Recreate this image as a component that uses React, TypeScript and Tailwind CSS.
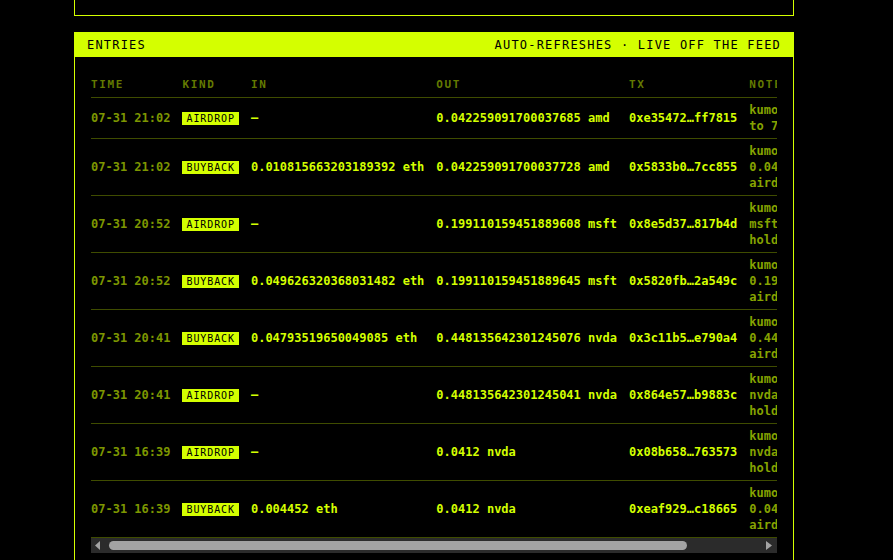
type Entry = {
  time: string;
  kind: "AIRDROP" | "BUYBACK";
  amountIn: string;
  amountOut: string;
  tx: string;
  note: string[];
};

const entries: Entry[] = [
  { time: "07-31 21:02", kind: "AIRDROP", amountIn: "—", amountOut: "0.042259091700037685 amd", tx: "0xe35472…ff7815", note: ["kumo airdrop", "to 7 holders"] },
  { time: "07-31 21:02", kind: "BUYBACK", amountIn: "0.010815663203189392 eth", amountOut: "0.042259091700037728 amd", tx: "0x5833b0…7cc855", note: ["kumo bought", "0.0422 amd for", "airdrop"] },
  { time: "07-31 20:52", kind: "AIRDROP", amountIn: "—", amountOut: "0.199110159451889608 msft", tx: "0x8e5d37…817b4d", note: ["kumo airdrop", "msft to 12", "holders"] },
  { time: "07-31 20:52", kind: "BUYBACK", amountIn: "0.049626320368031482 eth", amountOut: "0.199110159451889645 msft", tx: "0x5820fb…2a549c", note: ["kumo bought", "0.1991 msft", "airdrop"] },
  { time: "07-31 20:41", kind: "BUYBACK", amountIn: "0.04793519650049085 eth", amountOut: "0.448135642301245076 nvda", tx: "0x3c11b5…e790a4", note: ["kumo bought", "0.4481 nvda", "airdrop"] },
  { time: "07-31 20:41", kind: "AIRDROP", amountIn: "—", amountOut: "0.448135642301245041 nvda", tx: "0x864e57…b9883c", note: ["kumo airdrop", "nvda to 9", "holders"] },
  { time: "07-31 16:39", kind: "AIRDROP", amountIn: "—", amountOut: "0.0412 nvda", tx: "0x08b658…763573", note: ["kumo airdrop", "nvda to 4", "holders"] },
  { time: "07-31 16:39", kind: "BUYBACK", amountIn: "0.004452 eth", amountOut: "0.0412 nvda", tx: "0xeaf929…c18665", note: ["kumo bought", "0.0412 nvda", "airdrop"] },
];

const headers = ["TIME", "KIND", "IN", "OUT", "TX", "NOTE"];

// static horizontal scrollbar, drawn like the dark classic one
const ScrollBar = () => (
  <div className="flex h-[15px] items-center bg-[#2b2b2b]">
    <div className="flex h-full w-[16px] items-center justify-center">
      <svg width="16" height="15" viewBox="0 0 16 15">
        <polygon points="4,7.5 9,3 9,12" fill="#a3a3a3" />
      </svg>
    </div>
    <div className="ml-[2px] h-[9px] w-[578px] rounded-full bg-[#a3a3a3]" />
    <div className="flex-1" />
    <div className="flex h-full w-[16px] items-center justify-center">
      <svg width="16" height="15" viewBox="0 0 16 15">
        <polygon points="11,7.5 5,3 5,12" fill="#a3a3a3" />
      </svg>
    </div>
  </div>
);

export default function App() {
  return (
    <div className="min-h-screen bg-black font-['DejaVu_Sans_Mono',monospace] text-[12px]">
      <div className="ml-[74px] w-[720px]">
        <div className="h-[16px] border-x border-b border-[#d4ff00]" />

        <div className="mt-4 border border-[#d4ff00]">
          <div className="flex h-[24px] items-center justify-between bg-[#d4ff00] px-3 text-[12px] tracking-[0.1em] text-black">
            <span>ENTRIES</span>
            <span>AUTO-REFRESHES · LIVE OFF THE FEED</span>
          </div>

          <div className="p-4">
            <div className="overflow-hidden">
              <table className="border-collapse whitespace-nowrap text-left">
                <thead>
                  <tr className="border-b border-[#3f4c00]">
                    {headers.map((h) => (
                      <th key={h} className="h-[24px] pr-3 align-middle text-[11px] font-bold tracking-[0.15em] text-[#647a00]">
                        {h}
                      </th>
                    ))}
                  </tr>
                </thead>
                <tbody>
                  {entries.map((e, i) => (
                    <tr key={i} className="border-b border-[#3f4c00] font-bold leading-[16px]">
                      <td className="py-1 pr-3 align-middle text-[#7d9600]">{e.time}</td>
                      <td className="py-1 pr-3 align-middle">
                        <span className="inline-block bg-[#d4ff00] px-1 text-[10px] font-normal leading-[13px] tracking-[0.09em] text-black">
                          {e.kind}
                        </span>
                      </td>
                      <td className="py-1 pr-3 align-middle text-[#d4ff00]">{e.amountIn}</td>
                      <td className="py-1 pr-3 align-middle text-[#d4ff00]">{e.amountOut}</td>
                      <td className="py-1 pr-3 align-middle text-[#d4ff00]">{e.tx}</td>
                      <td className="py-1 pr-3 align-middle text-[#86a300]">
                        <div className="w-[107px] overflow-hidden">
                          {e.note.map((line, j) => (
                            <div key={j}>{line}</div>
                          ))}
                        </div>
                      </td>
                    </tr>
                  ))}
                </tbody>
              </table>
            </div>
            <ScrollBar />
          </div>
        </div>
      </div>
    </div>
  );
}
